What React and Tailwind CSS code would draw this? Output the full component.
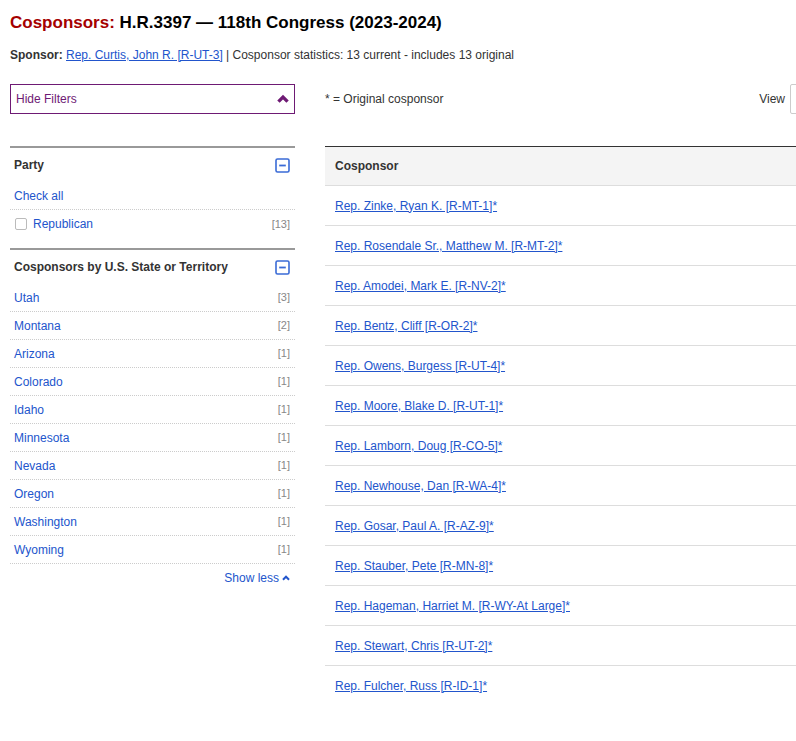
const states = [
  ['Utah', 3],
  ['Montana', 2],
  ['Arizona', 1],
  ['Colorado', 1],
  ['Idaho', 1],
  ['Minnesota', 1],
  ['Nevada', 1],
  ['Oregon', 1],
  ['Washington', 1],
  ['Wyoming', 1],
];

const cosponsors = [
  'Rep. Zinke, Ryan K. [R-MT-1]*',
  'Rep. Rosendale Sr., Matthew M. [R-MT-2]*',
  'Rep. Amodei, Mark E. [R-NV-2]*',
  'Rep. Bentz, Cliff [R-OR-2]*',
  'Rep. Owens, Burgess [R-UT-4]*',
  'Rep. Moore, Blake D. [R-UT-1]*',
  'Rep. Lamborn, Doug [R-CO-5]*',
  'Rep. Newhouse, Dan [R-WA-4]*',
  'Rep. Gosar, Paul A. [R-AZ-9]*',
  'Rep. Stauber, Pete [R-MN-8]*',
  'Rep. Hageman, Harriet M. [R-WY-At Large]*',
  'Rep. Stewart, Chris [R-UT-2]*',
  'Rep. Fulcher, Russ [R-ID-1]*',
];

function MinusBox() {
  return (
    <svg width="15" height="15" viewBox="0 0 15 15" className="shrink-0">
      <rect x="1" y="1" width="13" height="13" rx="1.5" fill="none" stroke="#3a6bd6" strokeWidth="1.6" />
      <line x1="4.2" y1="7.5" x2="10.8" y2="7.5" stroke="#3a6bd6" strokeWidth="1.8" />
    </svg>
  );
}

function Chevron({ color, size = 10, width = 2.6 }) {
  return (
    <svg width={size} height={size} viewBox="0 0 10 10">
      <polyline points="1.2,7.2 5,3.4 8.8,7.2" fill="none" stroke={color} strokeWidth={width} />
    </svg>
  );
}

export default function App() {
  return (
    <div className="w-full overflow-hidden bg-white text-[#333] font-['Liberation_Sans',Arial,sans-serif]">
      <div className="w-[1000px] px-[10px]">
        {/* Title */}
        <h1 className="mt-[12px] text-[17px] leading-[21px] font-bold text-black">
          <span className="text-[#a50000]">Cosponsors:</span> H.R.3397 — 118th Congress (2023-2024)
        </h1>
        <p className="mt-[14px] text-[12px] leading-[16px] text-[#333]">
          <span className="font-bold">Sponsor:</span>{' '}
          <a href="#" className="text-[#2255cc] underline">Rep. Curtis, John R. [R-UT-3]</a>
          {' '}| Cosponsor statistics: 13 current - includes 13 original
        </p>

        <div className="mt-[21px] flex items-start gap-[30px]">
          {/* Filters column */}
          <div className="w-[285px] shrink-0">
            <button className="w-full h-[30px] border border-[#6e1a74] flex items-center justify-between pl-[5px] pr-[5px] text-[12px] text-[#6e1a74]">
              <span>Hide Filters</span>
              <Chevron color="#6e1a74" size={12} width={2.8} />
            </button>

            <div className="mt-[32px] border-t-2 border-[#999]">
              <div className="h-[34px] flex items-center justify-between pl-[4px] pr-[5px]">
                <span className="text-[12px] font-bold text-[#333]">Party</span>
                <MinusBox />
              </div>
              <div className="h-[28px] flex items-center pl-[4px] border-b border-dotted border-[#ccc] text-[12px] text-[#2255cc]">
                Check all
              </div>
              <div className="h-[28px] flex items-center justify-between pl-[5px] pr-[5px] text-[12px]">
                <span className="flex items-center gap-[6px]">
                  <span className="w-[12px] h-[12px] rounded-[2px] border border-[#bbb] bg-white" />
                  <span className="text-[#2255cc]">Republican</span>
                </span>
                <span className="text-[11px] text-[#888]">[13]</span>
              </div>
            </div>

            <div className="mt-[10px] border-t-2 border-[#999]">
              <div className="h-[34px] flex items-center justify-between pl-[4px] pr-[5px]">
                <span className="text-[12px] font-bold text-[#333]">Cosponsors by U.S. State or Territory</span>
                <MinusBox />
              </div>
              {states.map(([name, n]) => (
                <div key={name} className="h-[28px] flex items-center justify-between pl-[4px] pr-[5px] border-b border-dotted border-[#ccc] text-[12px]">
                  <span className="text-[#2255cc]">{name}</span>
                  <span className="text-[11px] text-[#888]">[{n}]</span>
                </div>
              ))}
              <div className="h-[27px] flex items-center justify-end gap-[3px] pr-[5px] text-[12px] text-[#2255cc]">
                Show less
                <Chevron color="#2255cc" size={8} width={2.4} />
              </div>
            </div>
          </div>

          {/* Results column */}
          <div className="w-[615px] shrink-0">
            <div className="h-[30px] flex items-center justify-between text-[12px] text-[#333]">
              <span>* = Original cosponsor</span>
              <div className="flex items-center gap-[5px]">
                <span>View</span>
                <div className="w-[150px] h-[30px] border border-[#ccc] rounded-[2px] bg-white" />
              </div>
            </div>

            <div className="mt-[32px] border-t border-[#333]">
              <div className="h-[39px] bg-[#f4f4f4] border-b border-[#ddd] flex items-center pl-[10px] text-[12px] font-bold text-[#333]">
                Cosponsor
              </div>
              {cosponsors.map((c, i) => (
                <div
                  key={c}
                  className={`h-[40px] flex items-center pl-[10px] text-[12px] ${i < cosponsors.length - 1 ? 'border-b border-[#ddd]' : ''}`}
                >
                  <a href="#" className="text-[#2255cc] underline">{c}</a>
                </div>
              ))}
            </div>
          </div>
        </div>
        <div className="h-[30px]" />
      </div>
    </div>
  );
}
